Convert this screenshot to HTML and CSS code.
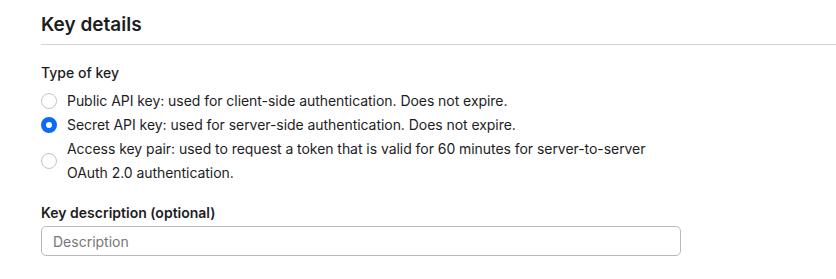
FILE: index.html
```html
<!DOCTYPE html>
<html lang="en">
<head>
<meta charset="utf-8">
<title>Key details</title>
<link rel="stylesheet" href="styles.css">
</head>
<body>
<section class="panel">
  <h2 class="panel-title">Key details</h2>
  <div class="form">
    <fieldset class="field">
      <legend class="field-label">Type of key</legend>
      <label class="radio-row">
        <span class="radio"></span>
        <span class="radio-text">Public API key: used for client-side authentication. Does not expire.</span>
      </label>
      <label class="radio-row">
        <span class="radio radio-checked"></span>
        <span class="radio-text">Secret API key: used for server-side authentication. Does not expire.</span>
      </label>
      <label class="radio-row radio-row-center">
        <span class="radio"></span>
        <span class="radio-text">Access key pair: used to request a token that is valid for 60 minutes for server-to-server OAuth 2.0 authentication.</span>
      </label>
    </fieldset>
    <div class="field field-desc">
      <label class="field-label" for="desc">Key description (optional)</label>
      <input class="text-input" id="desc" type="text" placeholder="Description">
    </div>
  </div>
</section>
</body>
</html>
```

FILE: styles.css
```css
html, body {
  margin: 0;
  padding: 0;
  background: #ffffff;
}
body {
  font-family: "Inter", "Liberation Sans", Arial, sans-serif;
  color: #1d1d1f;
  -webkit-font-smoothing: antialiased;
}
.panel {
  padding-left: 41px;
}
.panel-title {
  margin: 0;
  padding: 13px 0 7px;
  font-size: 19px;
  line-height: 24px;
  font-weight: 600;
  color: #1d1d1f;
  border-bottom: 1px solid #d6d6d6;
}
.form {
  width: 640px;
  padding-top: 17px;
}
.field {
  margin: 0;
  padding: 0;
  border: 0;
  min-width: 0;
}
.field-label {
  display: block;
  padding: 0;
  margin: 0 0 5px;
  font-size: 14px;
  line-height: 22px;
  font-weight: 500;
  color: #1d1d1f;
}
.radio-row {
  display: flex;
  align-items: flex-start;
  gap: 10px;
  font-size: 14px;
  line-height: 24px;
  letter-spacing: -0.05px;
  color: #1d1d1f;
}
.radio-row-center {
  align-items: center;
}
.radio {
  flex: none;
  box-sizing: border-box;
  width: 16px;
  height: 16px;
  margin-top: 4px;
  border-radius: 50%;
  border: 1px solid #c4c4c4;
  background: #fff;
}
.radio-row-center .radio {
  margin-top: 0;
}
.radio-checked {
  border: 5px solid #0a6cf5;
  background: #fff;
}
.radio-text {
  flex: 1;
}
.field-desc {
  margin-top: 17px;
}
.field-desc .field-label {
  font-weight: 600;
  margin-bottom: 2px;
}
.text-input {
  display: block;
  box-sizing: border-box;
  width: 640px;
  height: 30px;
  padding: 0 11px;
  border: 1px solid #b9b9b9;
  border-radius: 5px;
  font-family: inherit;
  font-size: 14px;
  color: #1d1d1f;
  background: #fff;
}
.text-input::placeholder {
  color: #777;
}
```
